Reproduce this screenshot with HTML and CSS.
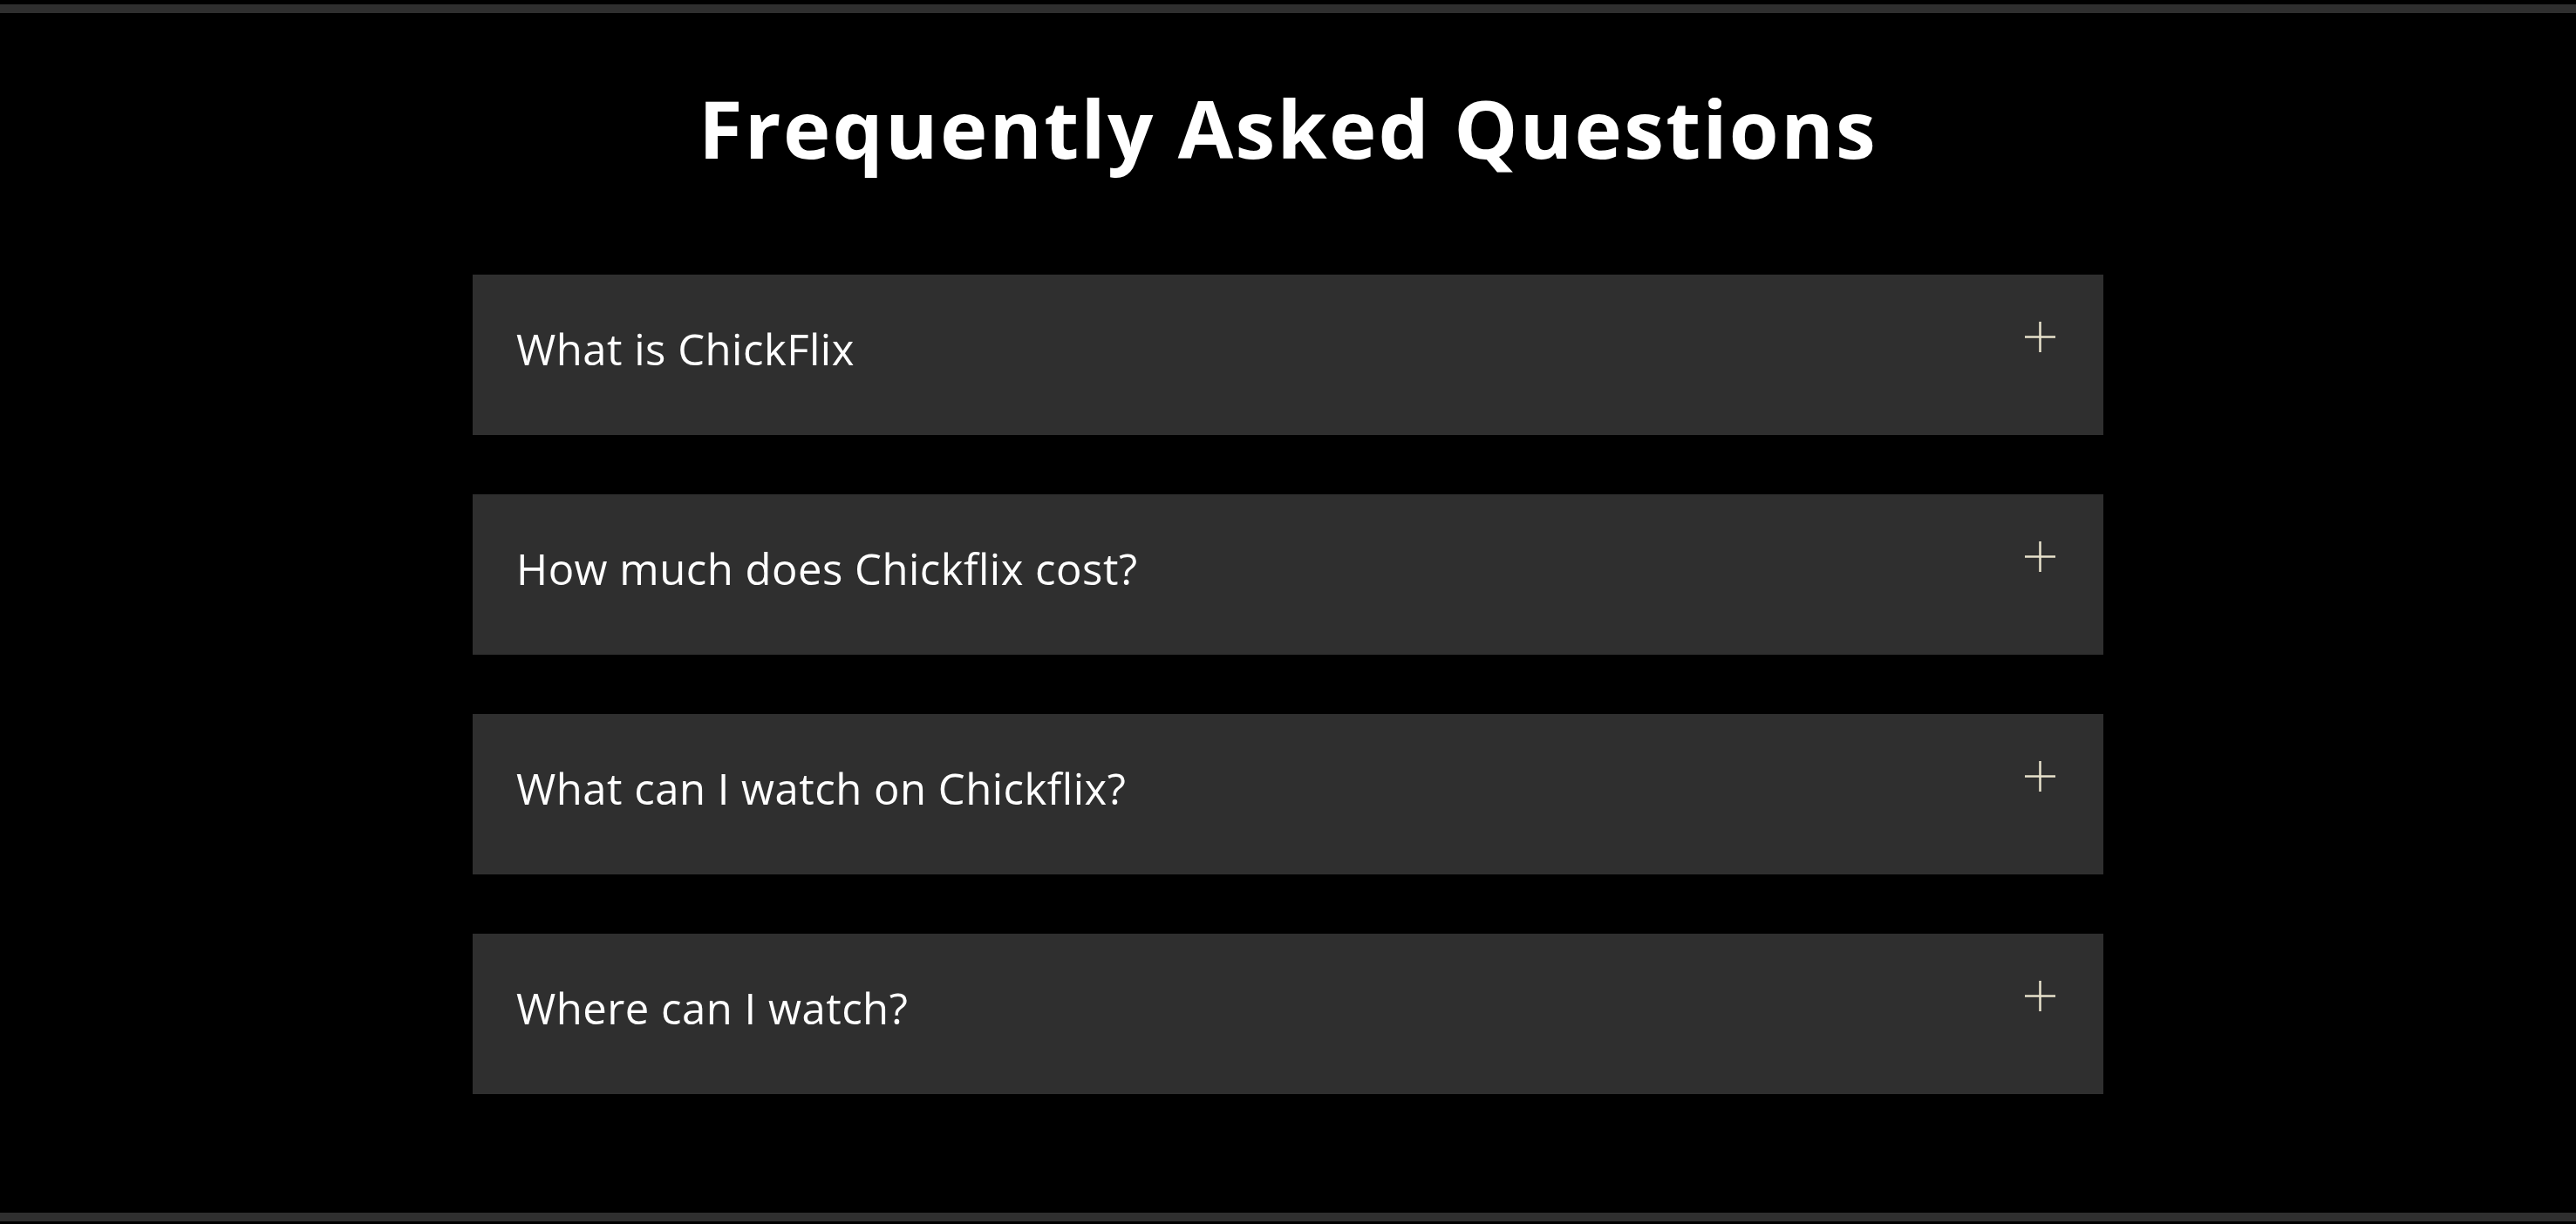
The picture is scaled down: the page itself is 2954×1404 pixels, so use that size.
FILE: index.html
```html
<!DOCTYPE html>
<html lang="en">
<head>
<meta charset="utf-8">
<title>ChickFlix FAQ</title>
<link rel="stylesheet" href="styles.css">
</head>
<body>
  <section class="faq">
    <h2 class="faq-title">Frequently Asked Questions</h2>
    <ul class="faq-list">
      <li class="faq-item">
        <span class="faq-question">What is ChickFlix</span>
        <svg class="faq-plus" viewBox="0 0 36 36" aria-hidden="true"><path d="M18 0V36M0 18H36"/></svg>
      </li>
      <li class="faq-item">
        <span class="faq-question">How much does Chickflix cost?</span>
        <svg class="faq-plus" viewBox="0 0 36 36" aria-hidden="true"><path d="M18 0V36M0 18H36"/></svg>
      </li>
      <li class="faq-item">
        <span class="faq-question">What can I watch on Chickflix?</span>
        <svg class="faq-plus" viewBox="0 0 36 36" aria-hidden="true"><path d="M18 0V36M0 18H36"/></svg>
      </li>
      <li class="faq-item">
        <span class="faq-question">Where can I watch?</span>
        <svg class="faq-plus" viewBox="0 0 36 36" aria-hidden="true"><path d="M18 0V36M0 18H36"/></svg>
      </li>
    </ul>
  </section>
</body>
</html>
```
FILE: styles.css
```css
html, body {
  margin: 0;
  padding: 0;
  background: #000;
}
body {
  padding-top: 5px;
  font-family: "Open Sans", Lato, "Liberation Sans", sans-serif;
  color: #fff;
}
.faq {
  border-top: 10px solid #2f2f2f;
  border-bottom: 10px solid #2f2f2f;
  padding: 86px 0 136px;
  display: flex;
  flex-direction: column;
  align-items: center;
}
.faq-title {
  margin: 0 0 122px;
  font-size: 92px;
  line-height: 92px;
  font-weight: 700;
  letter-spacing: 2.3px;
  text-align: center;
}
.faq-list {
  list-style: none;
  margin: 0;
  padding: 0;
  width: 1870px;
  display: flex;
  flex-direction: column;
  gap: 68px;
}
.faq-item {
  height: 184px;
  box-sizing: border-box;
  background: #2f2f2f;
  display: flex;
  align-items: center;
  justify-content: space-between;
  padding: 0 55px 14px 50px;
}
.faq-question {
  font-size: 49px;
  font-weight: 400;
  letter-spacing: 0.5px;
}
.faq-plus {
  align-self: flex-start;
  margin-top: 54px;
  width: 35px;
  height: 35px;
  stroke: #e8e2cc;
  stroke-width: 2.6;
  fill: none;
}
```
